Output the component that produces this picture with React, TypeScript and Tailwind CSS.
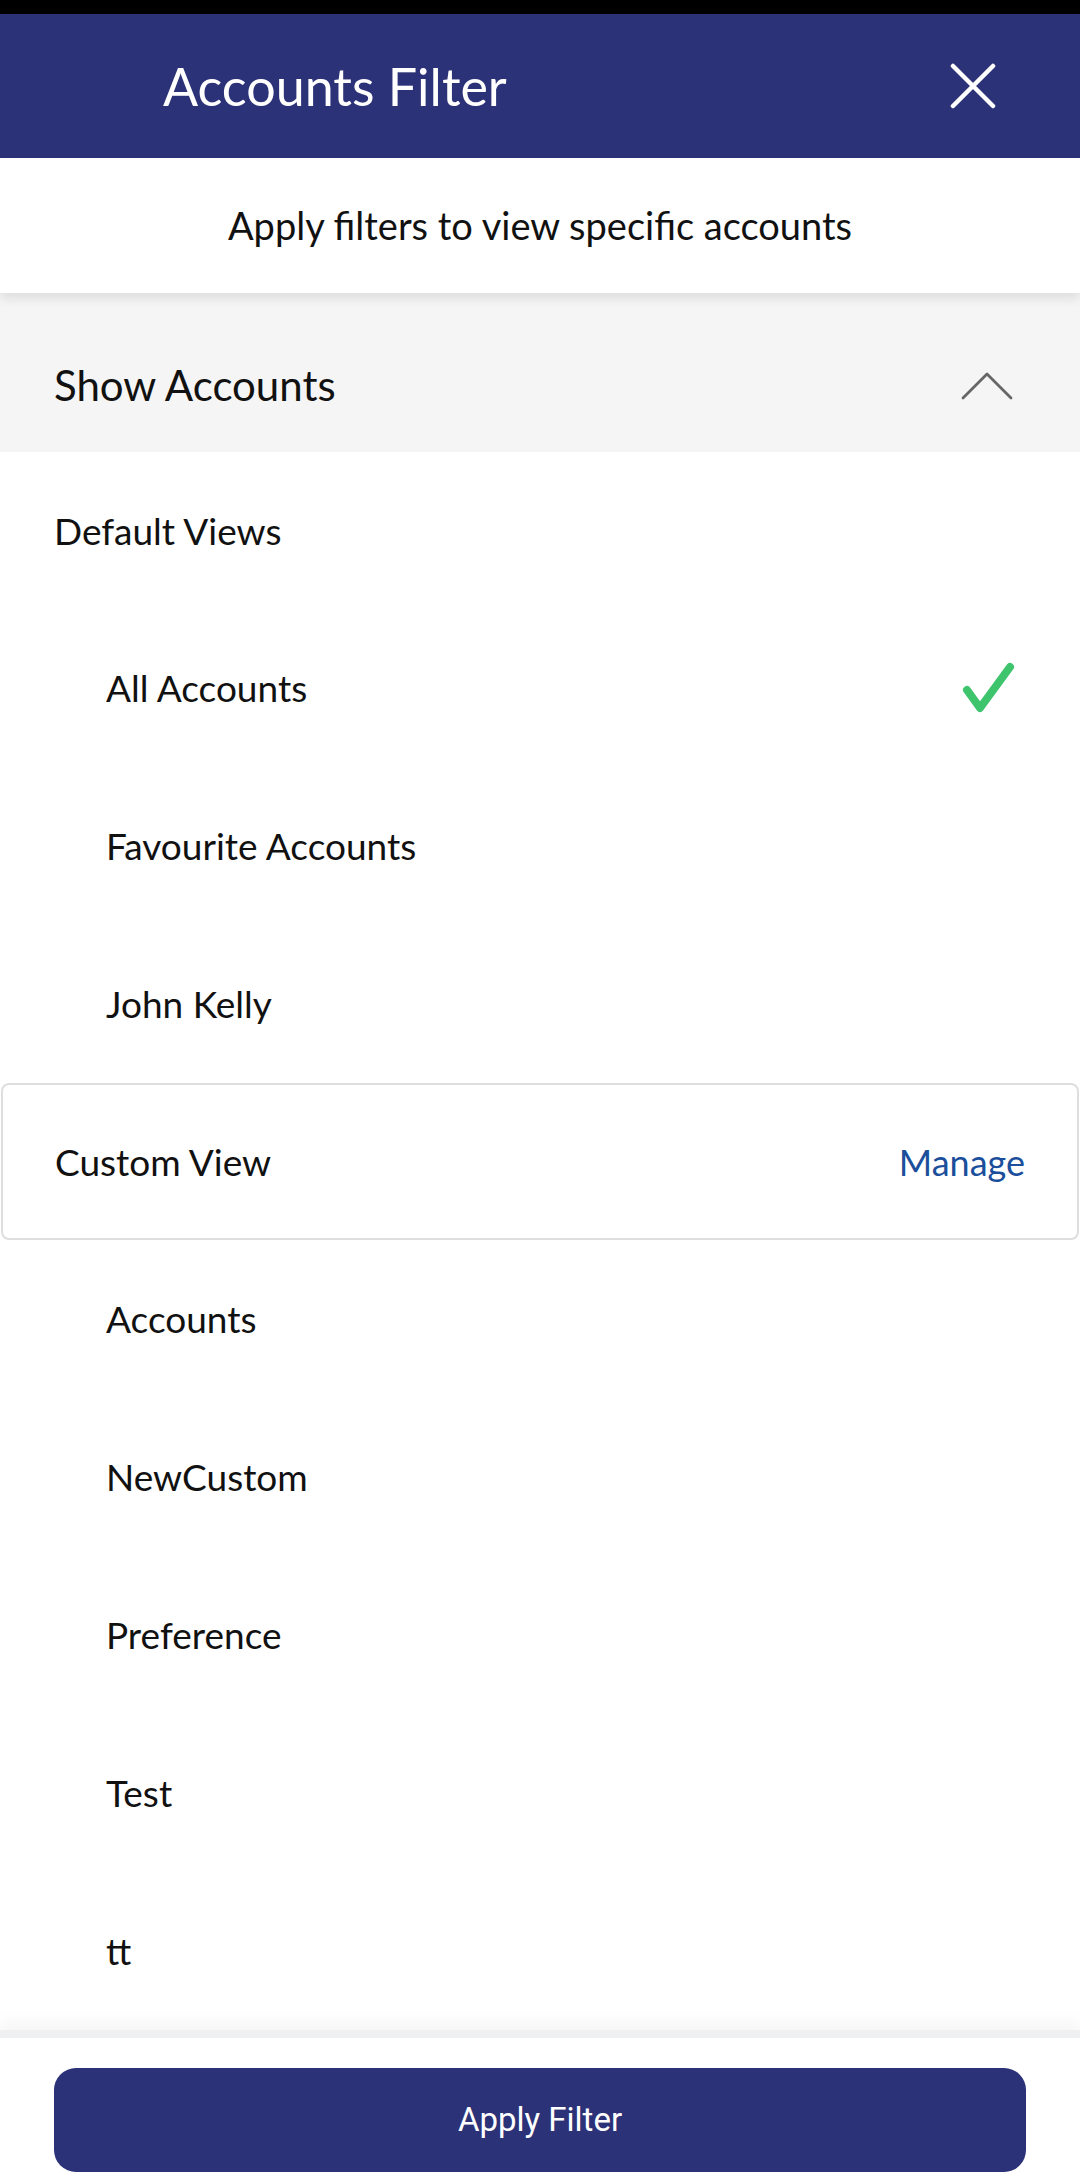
import React from 'react';

const defaultViews = ['All Accounts', 'Favourite Accounts', 'John Kelly'];
const customViews = ['Accounts', 'NewCustom', 'Preference', 'Test', 'tt'];

const CloseIcon = () => (
  <svg width="46" height="46" viewBox="0 0 46 46" fill="none">
    <path d="M3 3L43 43M43 3L3 43" stroke="white" strokeWidth="4.5" strokeLinecap="round" />
  </svg>
);

const ChevronUp = () => (
  <svg width="52" height="28" viewBox="0 0 52 28" fill="none">
    <path d="M2 26L26 2L50 26" stroke="#666666" strokeWidth="2.8" strokeLinecap="round" strokeLinejoin="round" />
  </svg>
);

const Check = () => (
  <svg width="54" height="54" viewBox="0 0 54 54" fill="none">
    <path d="M5 29L18 47L48 6" stroke="#3ec46d" strokeWidth="8" strokeLinecap="round" strokeLinejoin="round" />
  </svg>
);

export default function App() {
  const selected = 'All Accounts';

  return (
    <div className="w-[1080px] h-[2180px] bg-white flex flex-col overflow-hidden text-[#111111] font-['Lato',sans-serif]">
      <div className="h-[14px] bg-black shrink-0" />

      {/* header */}
      <div className="h-[144px] bg-[#2b3277] flex items-center justify-between pl-[163px] pr-[84px] shrink-0">
        <h1 className="text-white text-[52px] leading-none">Accounts Filter</h1>
        <CloseIcon />
      </div>

      <div className="relative z-10 h-[135px] bg-white flex items-center justify-center shadow-[0_6px_10px_rgba(0,0,0,0.09)] shrink-0">
        <p className="text-[38px]">Apply filters to view specific accounts</p>
      </div>

      {/* list */}
      <div className="flex-1 flex flex-col">
        <div className="h-[159px] bg-[#f5f5f5] flex items-center justify-between pl-[54px] pr-[67px] pt-[26px]">
          <span className="text-[42px]">Show Accounts</span>
          <ChevronUp />
        </div>

        <div className="h-[157px] flex items-center pl-[54px]">
          <span className="text-[37px]">Default Views</span>
        </div>

        {defaultViews.map((name) => (
          <div key={name} className="h-[158px] flex items-center justify-between pl-[106px] pr-[64px]">
            <span className="text-[37px]">{name}</span>
            {name === selected && <Check />}
          </div>
        ))}

        <div className="h-[157px] mx-px border-2 border-[#dedede] rounded-[8px] flex items-center justify-between pl-[52px] pr-[52px]">
          <span className="text-[37px]">Custom View</span>
          <span className="text-[36px] text-[#1b4f9c]">Manage</span>
        </div>

        {customViews.map((name) => (
          <div key={name} className="h-[158px] flex items-center pl-[106px]">
            <span className="text-[37px]">{name}</span>
          </div>
        ))}
      </div>

      {/* footer */}
      <div className="h-[150px] shrink-0 border-t-[8px] border-[#eef0f2] shadow-[0_-10px_14px_rgba(0,0,0,0.035)] bg-white px-[54px] pt-[30px]">
        <button className="w-full h-[104px] rounded-[22px] bg-[#2b3277] text-white text-[33px] font-['Roboto',sans-serif]">
          Apply Filter
        </button>
      </div>
    </div>
  );
}
